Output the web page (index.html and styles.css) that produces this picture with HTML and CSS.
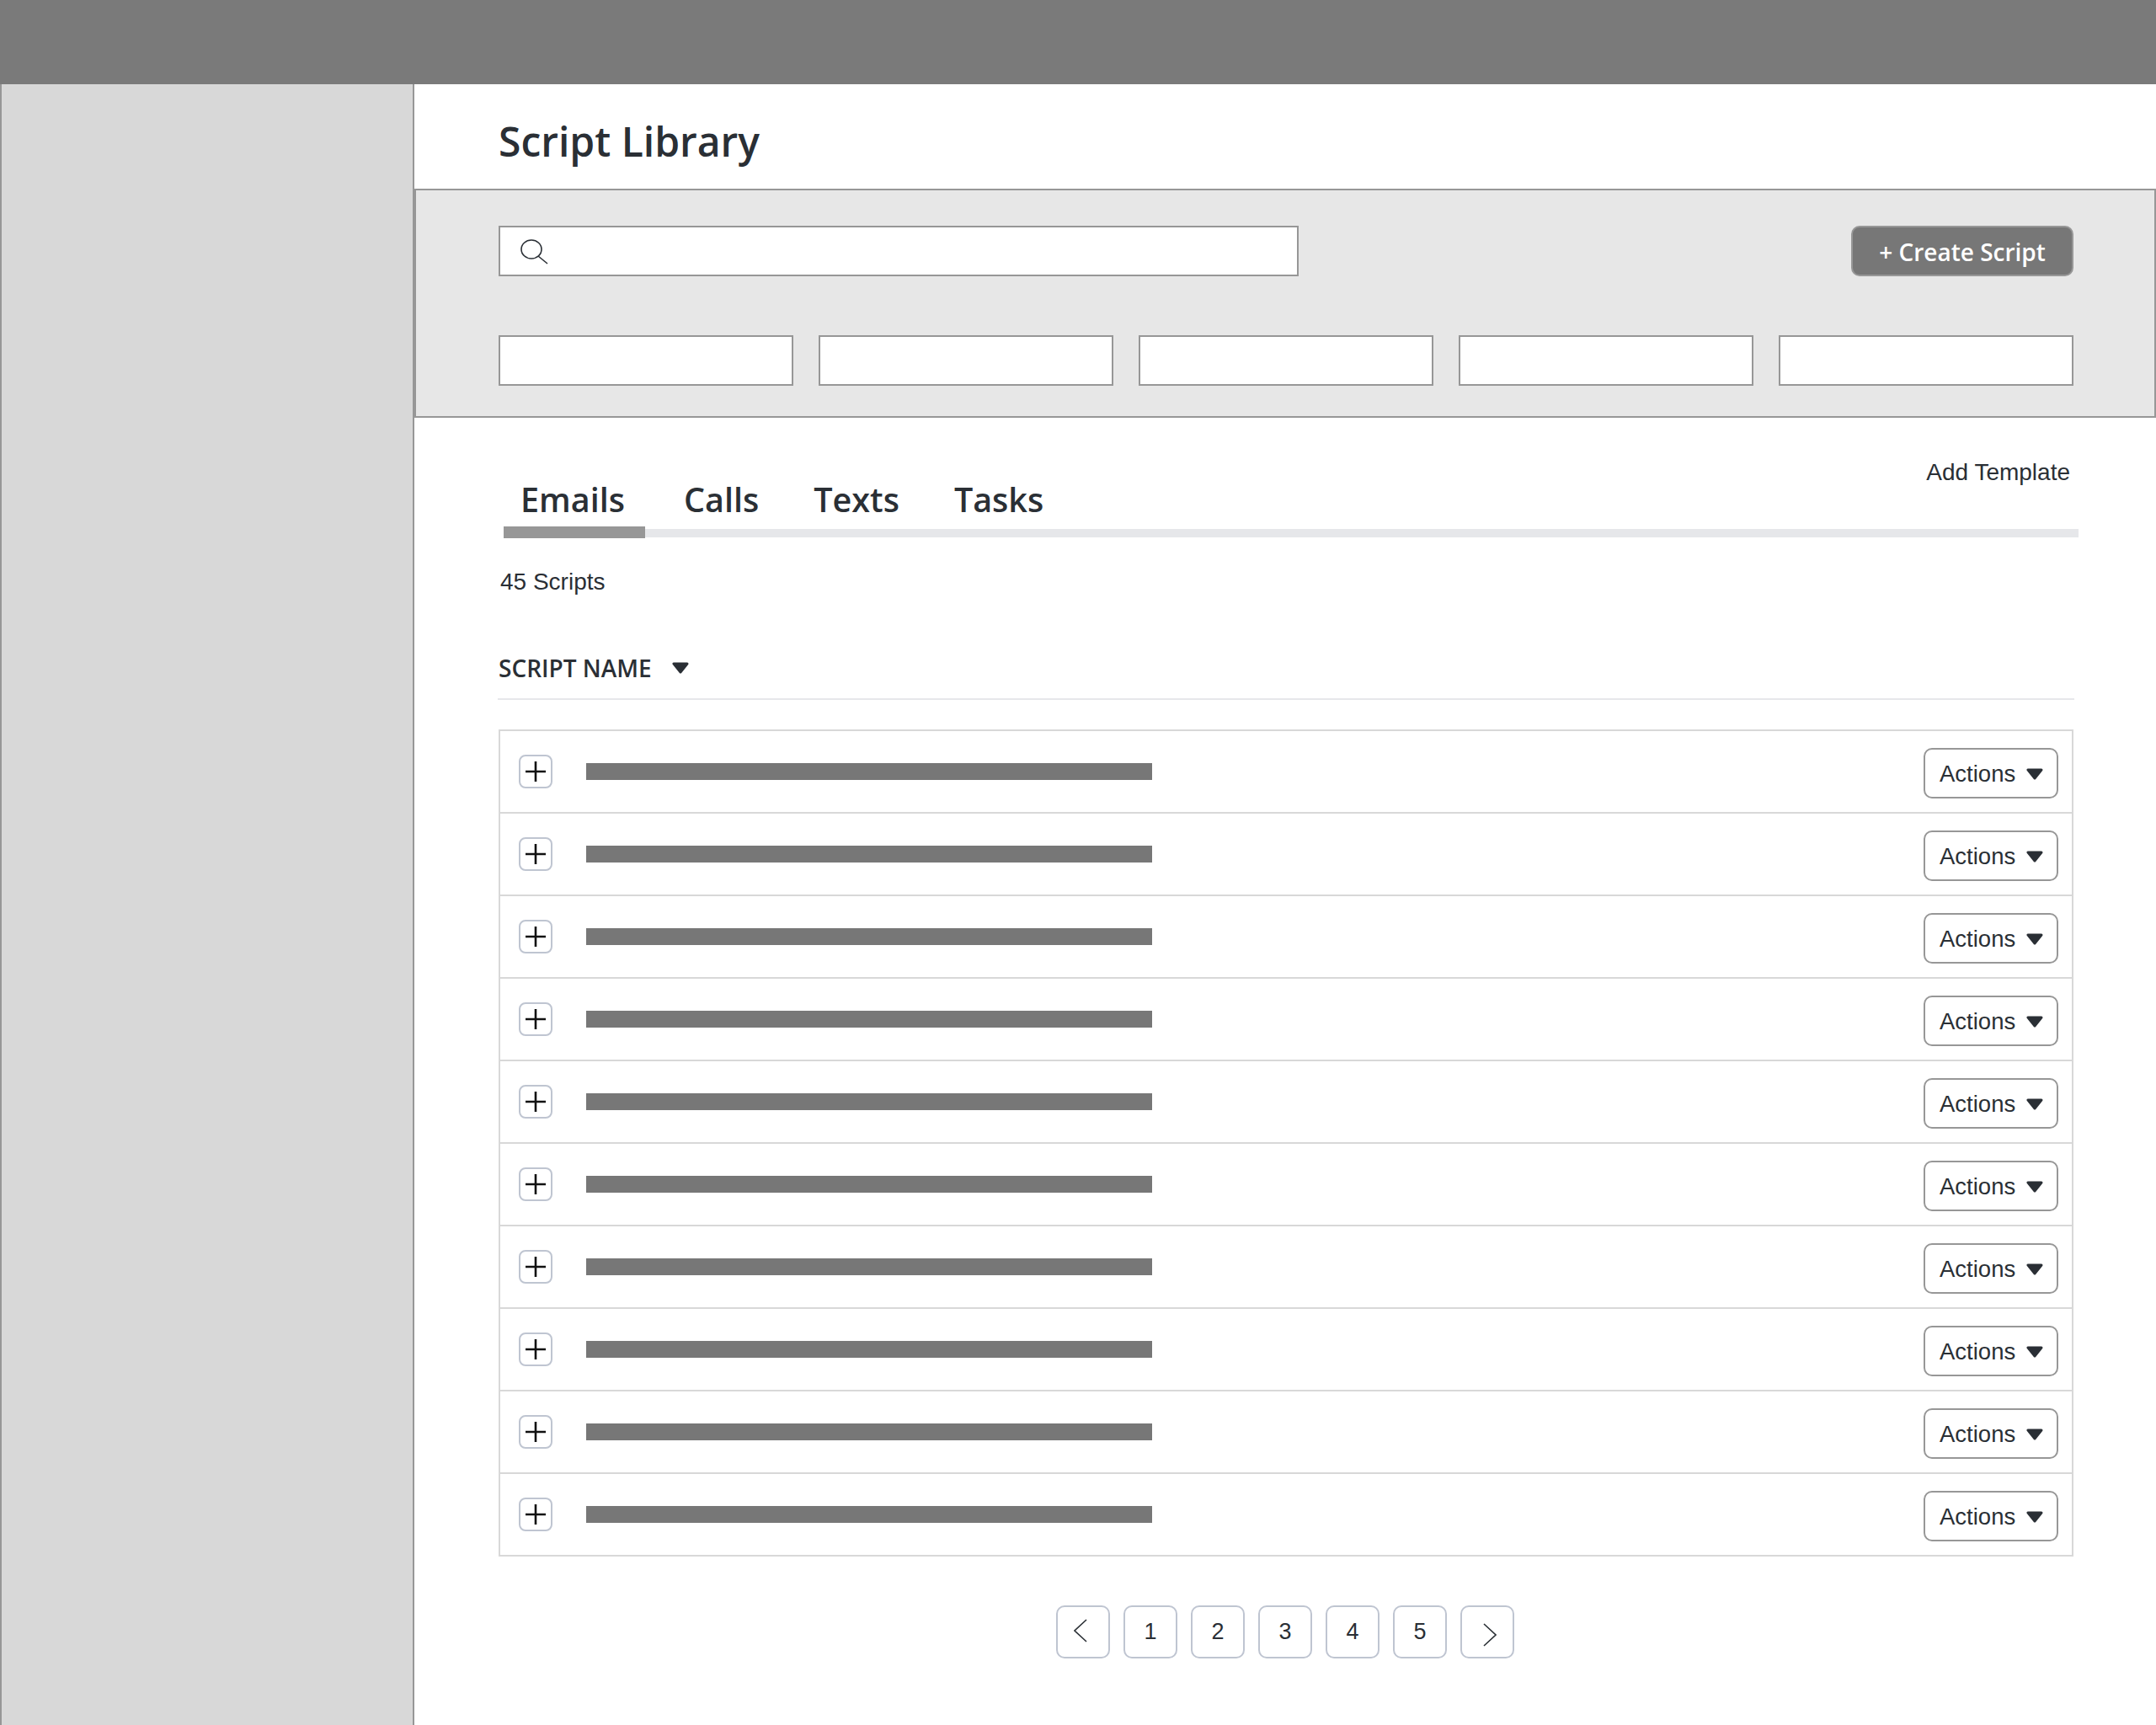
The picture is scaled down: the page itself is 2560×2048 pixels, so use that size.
FILE: index.html
```html
<!DOCTYPE html>
<html lang="en">
<head>
    <meta charset="UTF-8">
    <meta name="viewport" content="width=device-width, initial-scale=1.0">
    <title>Script Library</title>
    <link rel="stylesheet" href="styles.css">
</head>
<body>
    <svg class="icon-defs" width="0" height="0">
        <symbol id="caret" viewBox="0 0 20 14">
            <path d="M2 2 H18 L10 12 Z" fill="#2a2f35" stroke="#2a2f35" stroke-width="3" stroke-linejoin="round"/>
        </symbol>
        <symbol id="plus" viewBox="0 0 26 26">
            <path d="M13 1 V25 M1 13 H25" fill="none" stroke="#111" stroke-width="2.6"/>
        </symbol>
    </svg>

    <header class="topbar"></header>

    <div class="layout">
        <aside class="sidebar"></aside>

        <main class="content">
            <h1 class="page-title">Script Library</h1>

            <section class="filters">
                <div class="filters-top">
                    <div class="search-box">
                        <svg class="search-icon" width="34" height="30" viewBox="0 0 34 30">
                            <ellipse cx="13" cy="12" rx="12" ry="11" fill="none" stroke="#2a2f35" stroke-width="1.6"/>
                            <path d="M21 20 L32 29" fill="none" stroke="#2a2f35" stroke-width="1.6"/>
                        </svg>
                    </div>
                    <button class="create-btn">+ Create Script</button>
                </div>
                <div class="filter-row">
                    <div class="filter-box"></div>
                    <div class="filter-box"></div>
                    <div class="filter-box"></div>
                    <div class="filter-box"></div>
                    <div class="filter-box"></div>
                </div>
            </section>

            <section class="scripts">
                <div class="tabs">
                    <a class="tab active">Emails</a>
                    <a class="tab">Calls</a>
                    <a class="tab">Texts</a>
                    <a class="tab">Tasks</a>
                    <a class="add-template">Add Template</a>
                </div>

                <p class="script-count">45 Scripts</p>

                <div class="list-header">
                    <span>SCRIPT NAME</span>
                    <svg class="caret" width="20" height="14"><use href="#caret"/></svg>
                </div>

                <div class="script-list">
                    <div class="script-row">
                        <button class="expand-btn"><svg width="26" height="26"><use href="#plus"/></svg></button>
                        <div class="name-bar"></div>
                        <button class="actions-btn">Actions <svg class="caret" width="20" height="14"><use href="#caret"/></svg></button>
                    </div>
                    <div class="script-row">
                        <button class="expand-btn"><svg width="26" height="26"><use href="#plus"/></svg></button>
                        <div class="name-bar"></div>
                        <button class="actions-btn">Actions <svg class="caret" width="20" height="14"><use href="#caret"/></svg></button>
                    </div>
                    <div class="script-row">
                        <button class="expand-btn"><svg width="26" height="26"><use href="#plus"/></svg></button>
                        <div class="name-bar"></div>
                        <button class="actions-btn">Actions <svg class="caret" width="20" height="14"><use href="#caret"/></svg></button>
                    </div>
                    <div class="script-row">
                        <button class="expand-btn"><svg width="26" height="26"><use href="#plus"/></svg></button>
                        <div class="name-bar"></div>
                        <button class="actions-btn">Actions <svg class="caret" width="20" height="14"><use href="#caret"/></svg></button>
                    </div>
                    <div class="script-row">
                        <button class="expand-btn"><svg width="26" height="26"><use href="#plus"/></svg></button>
                        <div class="name-bar"></div>
                        <button class="actions-btn">Actions <svg class="caret" width="20" height="14"><use href="#caret"/></svg></button>
                    </div>
                    <div class="script-row">
                        <button class="expand-btn"><svg width="26" height="26"><use href="#plus"/></svg></button>
                        <div class="name-bar"></div>
                        <button class="actions-btn">Actions <svg class="caret" width="20" height="14"><use href="#caret"/></svg></button>
                    </div>
                    <div class="script-row">
                        <button class="expand-btn"><svg width="26" height="26"><use href="#plus"/></svg></button>
                        <div class="name-bar"></div>
                        <button class="actions-btn">Actions <svg class="caret" width="20" height="14"><use href="#caret"/></svg></button>
                    </div>
                    <div class="script-row">
                        <button class="expand-btn"><svg width="26" height="26"><use href="#plus"/></svg></button>
                        <div class="name-bar"></div>
                        <button class="actions-btn">Actions <svg class="caret" width="20" height="14"><use href="#caret"/></svg></button>
                    </div>
                    <div class="script-row">
                        <button class="expand-btn"><svg width="26" height="26"><use href="#plus"/></svg></button>
                        <div class="name-bar"></div>
                        <button class="actions-btn">Actions <svg class="caret" width="20" height="14"><use href="#caret"/></svg></button>
                    </div>
                    <div class="script-row">
                        <button class="expand-btn"><svg width="26" height="26"><use href="#plus"/></svg></button>
                        <div class="name-bar"></div>
                        <button class="actions-btn">Actions <svg class="caret" width="20" height="14"><use href="#caret"/></svg></button>
                    </div>
                </div>

                <nav class="pagination">
                    <a class="page-btn prev"><svg width="16" height="28" viewBox="0 0 16 28"><path d="M15 1 L1 14 L15 27" fill="none" stroke="#2a2f35" stroke-width="1.6"/></svg></a>
                    <a class="page-btn">1</a>
                    <a class="page-btn">2</a>
                    <a class="page-btn">3</a>
                    <a class="page-btn">4</a>
                    <a class="page-btn">5</a>
                    <a class="page-btn next"><svg width="16" height="28" viewBox="0 0 16 28"><path d="M1 1 L15 14 L1 27" fill="none" stroke="#2a2f35" stroke-width="1.6"/></svg></a>
                </nav>
            </section>
        </main>
    </div>
</body>
</html>
```

FILE: styles.css
```css
* {
    box-sizing: border-box;
}
body {
    margin: 0;
    width: 2560px;
    height: 2048px;
    overflow: hidden;
    background-color: #fff;
    color: #2a2f35;
    font-family: "Liberation Sans", Arial, sans-serif;
}
button {
    font: inherit;
    color: inherit;
    cursor: pointer;
}
.icon-defs {
    position: absolute;
}
.topbar {
    height: 100px;
    background-color: #7a7a7a;
}
.layout {
    display: flex;
    height: 1948px;
}
.sidebar {
    width: 492px;
    background-color: #d8d8d8;
    border-left: 2px solid #979797;
    border-right: 2px solid #979797;
}
.content {
    flex: 1;
    min-width: 0;
}
.page-title {
    height: 124px;
    margin: 0;
    padding: 35px 0 0 100px;
    font-family: "Open Sans", sans-serif;
    font-size: 48px;
    font-weight: 600;
    line-height: 66px;
}
.filters {
    height: 272px;
    padding: 42px 96px 0 98px;
    background-color: #e7e7e7;
    border: 2px solid #979797;
}
.filters-top {
    display: flex;
    justify-content: space-between;
    margin-bottom: 70px;
}
.search-box {
    display: flex;
    align-items: center;
    width: 950px;
    height: 60px;
    padding-left: 24px;
    background-color: #fff;
    border: 2px solid #979797;
}
.search-icon {
    margin-top: 2px;
}
.create-btn {
    width: 264px;
    height: 60px;
    padding: 2px 0 0;
    background-color: #777;
    border: 2px solid #979797;
    border-radius: 10px;
    color: #fff;
    font-family: "Open Sans", sans-serif;
    font-size: 28px;
    font-weight: 600;
}
.filter-row {
    display: grid;
    grid-template-columns: repeat(5, 1fr);
    column-gap: 30px;
}
.filter-box {
    height: 60px;
    background-color: #fff;
    border: 2px solid #979797;
}
.scripts {
    padding: 44px 98px 0 100px;
}
.tabs {
    position: relative;
    display: flex;
    align-items: flex-start;
    height: 98px;
    margin: 0 -6px 0 6px;
    padding-right: 10px;
    border-bottom: 10px solid #e6e7ea;
}
.tab {
    position: relative;
    margin-top: 26px;
    margin-right: 65px;
    font-family: "Open Sans", sans-serif;
    font-size: 39.5px;
    font-weight: 600;
    line-height: 54px;
}
.tab.active {
    width: 168px;
    margin-right: 46px;
    padding-left: 20px;
}
.tab.active::after {
    content: "";
    position: absolute;
    left: 0;
    right: 0;
    top: 59px;
    height: 14px;
    background-color: #979797;
}
.add-template {
    margin-left: auto;
    margin-top: 1px;
    font-size: 28px;
    line-height: 40px;
}
.script-count {
    margin: 33px 0 0 2px;
    font-size: 28px;
    line-height: 40px;
}
.list-header {
    display: flex;
    align-items: center;
    gap: 24px;
    height: 60px;
    margin: 60px -1px 0 -1px;
    padding: 0 0 14px 1px;
    border-bottom: 2px solid #e6e7ea;
    font-family: "Open Sans", sans-serif;
    font-size: 28px;
    font-weight: 600;
}
.script-list {
    margin-top: 35px;
    border: 2px solid #d8d8d8;
}
.script-row {
    display: flex;
    align-items: center;
    height: 98px;
    padding: 0 16px 0 22px;
    border-bottom: 2px solid #d8d8d8;
}
.script-row:last-child {
    height: 96px;
    border-bottom: none;
}
.expand-btn {
    display: flex;
    align-items: center;
    justify-content: center;
    width: 40px;
    height: 40px;
    padding: 0;
    background-color: #fff;
    border: 2px solid #bfc5d1;
    border-radius: 8px;
}
.name-bar {
    width: 672px;
    height: 20px;
    margin-left: 40px;
    background-color: #777;
}
.actions-btn {
    display: flex;
    align-items: center;
    justify-content: space-between;
    width: 160px;
    height: 60px;
    margin: 4px 0 0 auto;
    padding: 2px 16px 0 17px;
    background-color: #fff;
    border: 2px solid #979797;
    border-radius: 10px;
    font-size: 27.5px;
}
.pagination {
    display: flex;
    justify-content: center;
    gap: 16px;
    margin-top: 58px;
    padding-right: 2px;
}
.page-btn {
    display: flex;
    align-items: center;
    justify-content: center;
    width: 64px;
    height: 63px;
    border: 2px solid #bfc5d1;
    border-radius: 10px;
    font-size: 27px;
}
.page-btn.prev svg {
    margin-right: 6px;
    margin-top: -4px;
}
.page-btn.next svg {
    margin-top: 6px;
    margin-left: 5px;
}
```
